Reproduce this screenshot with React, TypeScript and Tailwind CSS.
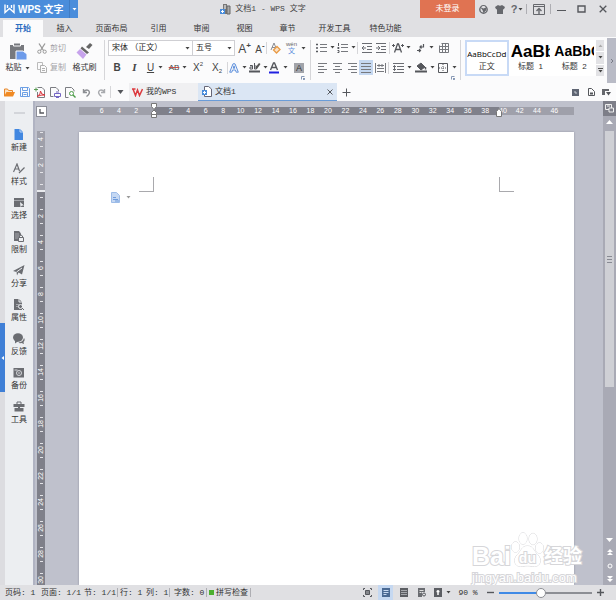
import React from "react";
import type { ReactNode } from "react";

const UI = "font-['Liberation_Sans','Noto_Sans_CJK_SC',sans-serif]";
const MONO = "font-['Liberation_Mono','Noto_Sans_CJK_SC',monospace]";

function Icon({ w = 12, h = 12, children }: { w?: number; h?: number; children: ReactNode }) {
  return (
    <svg width={w} height={h} viewBox={`0 0 ${w} ${h}`} fill="none" stroke="#55575c" strokeWidth="1" aria-hidden className="shrink-0">
      {children}
    </svg>
  );
}

function Caret() {
  return (
    <svg width="5" height="3" viewBox="0 0 5 3" className="shrink-0" aria-hidden>
      <path d="M0.5 0h4L2.5 2.6z" fill="#444" />
    </svg>
  );
}

function Btn({ className = "", title, children }: { className?: string; title: string; children: ReactNode }) {
  return (
    <button type="button" title={title} className={`flex h-[15px] shrink-0 items-center justify-center ${className}`}>
      {children}
    </button>
  );
}

function Sep({ className = "h-3", dark = false }: { className?: string; dark?: boolean }) {
  return <span className={`w-px shrink-0 ${dark ? "bg-[#aeaeb3]" : "bg-[#d6d6d9]"} ${className}`} />;
}

/* ---------- title bar ---------- */

function TitleBar() {
  return (
    <header className="flex h-[18px] items-center">
      <button type="button" className="flex h-full w-[69px] items-center gap-[3px] bg-[#4a8ddb] pl-1 text-[10px] text-white">
        <Icon w={11} h={10}>
          <path d="M1 0.500v8l4.500-4L10 8.500V.5M3.500 1v3M7.500 1v3" stroke="#fff" strokeWidth="1.400" />
        </Icon>
        <span className="whitespace-nowrap font-bold">WPS 文字</span>
      </button>
      <button type="button" title="菜单" className="flex h-full w-[9px] items-center justify-center border-l border-[#3f7cc4] bg-[#4a8ddb]">
        <svg width="5" height="3" viewBox="0 0 5 3" aria-hidden><path d="M0.500 0h4L2.500 2.600z" fill="#fff" /></svg>
      </button>
      <div className={`flex flex-1 items-center justify-center gap-1 pl-7 text-[8px] text-[#444] ${MONO}`}>
        <Icon w={11} h={12}>
          <path d="M3 1h4v10H3z" fill="#777" stroke="none" />
          <path d="M7 3h3v8H7z" fill="#aaa" stroke="#666" />
          <path d="M4 3h2M4 5h2" stroke="#fff" />
          <path d="M0 6h5v5H0z" fill="#4a8ddb" stroke="none" />
          <path d="M2.500 7v3M1 8.500h3" stroke="#fff" />
        </Icon>
        文档1 - WPS 文字
      </div>
      <button type="button" className="h-full w-[55px] bg-[#e07352] text-[8px] text-white">未登录</button>
      <Btn title="皮肤" className="w-4">
        <Icon w={9} h={9}>
          <circle cx="4.500" cy="4.500" r="3.700" stroke="#66686d" strokeWidth="1.400" />
          <path d="M1 2l3.500 1.500L8 2 7 5.500 4.500 8 3.500 5z" fill="#66686d" stroke="none" />
          <path d="M2.500 1h4l-2 1.500z" fill="#e0e0e3" stroke="none" />
        </Icon>
      </Btn>
      <Btn title="换肤" className="w-[17px]">
        <Icon w={10} h={9}>
          <path d="M0 2l3-2q2 1.500 4 0l3 2-1.200 2.500L8 4v5H2V4l-.8.5z" fill="#66686d" stroke="none" />
        </Icon>
      </Btn>
      <Btn title="帮助" className="w-[18px] gap-px text-[11px] font-bold text-[#66686d]">?<Caret /></Btn>
      <Sep dark className="h-[10px]" />
      <Btn title="功能区" className="w-[23px]">
        <Icon w={12} h={11}>
          <path d="M.5 .5h11v10H.5zM.5 2.500h11" stroke="#66686d" />
          <path d="M6 10V5M3.500 7L6 4.500 8.500 7" stroke="#66686d" strokeWidth="1.400" />
        </Icon>
      </Btn>
      <Sep dark className="h-[10px]" />
      <Btn title="最小化" className="w-[21px]"><Icon w={9} h={8}><path d="M0 5.500h9" /></Icon></Btn>
      <Btn title="最大化" className="w-[18px]"><Icon w={9} h={8}><path d="M1 1h7v6H1z" strokeWidth="1.400" /></Icon></Btn>
      <Btn title="关闭" className="w-[26px]"><Icon w={8} h={8}><path d="M.7 .7l6.600 6.600M7.300 .7L.7 7.300" strokeWidth="1.300" /></Icon></Btn>
    </header>
  );
}

const MENU = ["插入", "页面布局", "引用", "审阅", "视图", "章节", "开发工具", "特色功能"];

function MenuTabs() {
  return (
    <nav className="flex h-[19px] items-end pl-[3px] text-[8px] text-[#333]">
      <button type="button" className="h-[17px] w-10 bg-[#fbfbfc] font-bold text-[#2b6cc0]">开始</button>
      {MENU.map((m) => (
        <button key={m} type="button" className={`h-[17px] ${m.length === 4 ? "w-[51px]" : "w-[43px]"}`}>{m}</button>
      ))}
    </nav>
  );
}

/* ---------- ribbon ---------- */

function ClipboardGroup() {
  return (
    <div className="flex w-[104px] shrink-0 pt-1 text-[8px] text-[#333]">
      <button type="button" className="flex w-[35px] flex-col items-center gap-[2px] pt-px">
        <Icon w={18} h={18}>
          <path d="M1 3h14v14H1z" fill="#77797e" stroke="none" />
          <path d="M4.500 1h7v3h-7z" fill="#77797e" stroke="#fbfbfc" />
          <path d="M7 9h7l4 3v6H7z" fill="#6d9bea" stroke="#fbfbfc" />
        </Icon>
        <span className="flex items-center gap-[3px] leading-[12px]">粘贴<Caret /></span>
      </button>
      <div className="flex w-[33px] flex-col gap-1 text-[#a4a4a8]">
        <Btn title="剪切" className="gap-[3px]">
          <Icon w={10} h={11}>
            <path d="M2 .5l4.500 7M8 .5l-4.500 7" stroke="#999" strokeWidth="1.300" />
            <circle cx="2.300" cy="8.700" r="1.600" stroke="#999" /><circle cx="7.700" cy="8.700" r="1.600" stroke="#999" />
          </Icon>
          剪切
        </Btn>
        <Btn title="复制" className="gap-[3px]">
          <Icon w={10} h={11}>
            <path d="M.5 .5h5v7h-5z" stroke="#bbb" />
            <path d="M3.500 3.500h4l2 2v5h-6zM5 6.500h3M5 8.500h3" stroke="#b0b0b0" fill="#fbfbfc" />
          </Icon>
          复制
        </Btn>
      </div>
      <button type="button" className="flex w-[33px] flex-col items-center gap-[2px] pt-px">
        <Icon w={17} h={18}>
          <path d="M10 5l4-4 2.500 2-3.500 4z" fill="#666" stroke="none" />
          <path d="M6 4.500l7 6-2 1.500-6.500-5.500z" fill="#666" stroke="none" />
          <path d="M4 7l6.500 5.500L7 17 0.500 10.500z" fill="#c7a3ec" stroke="none" />
        </Icon>
        <span className="whitespace-nowrap leading-[12px]">格式刷</span>
      </button>
    </div>
  );
}

function Combo({ label, value, className }: { label: string; value: string; className: string }) {
  return (
    <label className={`grid h-4 shrink-0 grid-cols-1 items-center border border-[#cfcfd3] bg-white ${className}`}>
      <select aria-label={label} defaultValue={value} className="col-start-1 row-start-1 h-[14px] w-full appearance-none bg-transparent pl-[3px] text-[8px] text-[#222] outline-none">
        <option>{value}</option>
      </select>
      <span className="pointer-events-none col-start-1 row-start-1 mr-[2px] justify-self-end"><Caret /></span>
    </label>
  );
}

function FontGroup() {
  return (
    <div className="flex w-[205px] shrink-0 flex-col pt-[3px] text-[#444]">
      <div className="flex items-center pl-[3px]">
        <Combo label="字体" value="宋体 （正文）" className="w-[85px]" />
        <Combo label="字号" value="五号" className="-ml-px w-[43px]" />
        <Btn title="增大字号" className="w-[19px] items-start text-[12px] font-medium leading-[17px]">A<span className="text-[8px] font-bold leading-[9px]">+</span></Btn>
        <Btn title="减小字号" className="w-[12px] items-start text-[10px] font-medium leading-[17px]">A<span className="text-[8px] font-bold leading-[9px]">-</span></Btn>
        <Sep />
        <Btn title="清除格式" className="w-[17px]">
          <Icon w={11} h={12}>
            <path d="M1 8L4 1l2 5M2 5.500h3" stroke="#8a8c92" />
            <path d="M7 4.500l3 3-3.500 3.500-3-3z" stroke="#e89a45" strokeWidth="1.300" fill="#fbe3c8" />
          </Icon>
        </Btn>
        <Btn title="拼音指南" className="w-[24px] gap-[4px]">
          <span className="flex flex-col items-center text-[6px] leading-[5px] text-[#666]">wén<span className="text-[7px] leading-[7px] text-[#5c8fdc]">文</span></span>
          <Caret />
        </Btn>
      </div>
      <div className="flex items-center pl-[3px] pt-[4px]">
        <Btn title="加粗" className="w-[18px] text-[10px] font-bold">B</Btn>
        <Btn title="倾斜" className="w-[17px] font-['Liberation_Serif',serif] text-[11px] font-bold italic">I</Btn>
        <Btn title="下划线" className="w-[24px] gap-[4px] text-[10px] font-medium"><span className="underline">U</span><Caret /></Btn>
        <Btn title="删除线" className="w-[22px] gap-[3px] text-[8px]"><span className="line-through decoration-[#c0504d]">AB</span><Caret /></Btn>
        <Btn title="上标" className="w-[18px] items-start text-[10px] font-medium leading-[15px]">X<span className="text-[6px] leading-[8px]">2</span></Btn>
        <Btn title="下标" className="w-[20px] text-[10px] font-medium leading-[15px]">X<span className="pt-[6px] text-[6px] leading-[8px]">2</span></Btn>
        <Sep />
        <Btn title="文字效果" className="w-[20px] gap-[3px]">
          <Icon w={10} h={10}>
            <path d="M.7 9.200L4 .8h2l3.300 8.400H7.200L6.500 7h-3l-.7 2.200zM4.200 5.200h1.600L5 2.800z" stroke="#5c8fdc" />
          </Icon>
          <Caret />
        </Btn>
        <Btn title="突出显示" className="w-[20px] gap-[2px]">
          <Icon w={12} h={11}>
            <path d="M1 3.500h2.500v3.500H1V5h2.500M5.500 1v6M5.500 4h2v3h-2" />
            <path d="M6 6l4-5 1.500 1L8 7z" fill="#555" stroke="none" />
            <path d="M0 9.500h11" strokeWidth="2" />
          </Icon>
          <Caret />
        </Btn>
        <Btn title="字体颜色" className="w-[21px] gap-[4px]">
          <Icon w={10} h={12}>
            <path d="M1.500 8L4.500 1h1l3 7M3 5.500h4" strokeWidth="1.400" />
            <path d="M0 10.500h10" stroke="#2020e0" strokeWidth="2" />
          </Icon>
          <Caret />
        </Btn>
        <Btn title="字符底纹" className="w-[20px]"><span className="flex size-[10px] items-center justify-center bg-[#a2a4aa] text-[9px] leading-[10px] text-[#333]">A</span></Btn>
      </div>
      <Launcher />
    </div>
  );
}

function Launcher() {
  return (
    <div className="flex justify-end pr-[5px] pt-px">
      <Icon w={4} h={4}><path d="M.5 3.500v-3h3M2 2l1.500 1.500M3.500 2v1.500H2" stroke="#8798b5" /></Icon>
    </div>
  );
}

function Lines({ d }: { d: string }) {
  return <Icon w={10} h={10}><path d={d} stroke="#77797e" /></Icon>;
}

function ParagraphGroup() {
  return (
    <div className="flex w-[149px] shrink-0 flex-col pt-[3px]">
      <div className="flex items-center pl-[4px]">
        <Btn title="项目符号" className="w-[21px] gap-[3px]">
          <Icon w={11} h={10}><path d="M0 1.500h2M0 5h2M0 8.500h2" strokeWidth="1.500" /><path d="M4 1.500h7M4 4.500h7M4 8.500h7" stroke="#77797e" /></Icon><Caret />
        </Btn>
        <Btn title="编号" className="w-[20px] gap-[3px]">
          <Icon w={11} h={10}><path d="M1.500 0v3M.5 4.500h1.500v1H.5M.5 7.500h1.500v2H.5" /><path d="M4 1.500h7M4 4.500h7M4 8.500h7" stroke="#77797e" /></Icon><Caret />
        </Btn>
        <Sep className="mx-px h-3" />
        <Btn title="减少缩进" className="w-[15px]"><Icon w={10} h={10}><path d="M0 .5h10M5 3.500h5M5 6.500h5M0 9.500h10M4 5H0M2 3L0 5l2 2" stroke="#6a6c72" /></Icon></Btn>
        <Btn title="增加缩进" className="w-[14px]"><Icon w={10} h={10}><path d="M0 .5h10M5 3.500h5M5 6.500h5M0 9.500h10M0 5h4M2 3l2 2-2 2" stroke="#6a6c72" /></Icon></Btn>
        <Sep className="mx-px h-3" />
        <Btn title="中文版式" className="w-[21px] gap-[2px]">
          <Icon w={12} h={10}><path d="M2.500 9.500L5.500 1h1l3 8.500M4 6.500h4" strokeWidth="1.300" /><path d="M0 2.500h3M9 2.500h3M1.500 1v3M10.500 1v3" /></Icon><Caret />
        </Btn>
        <Btn title="显示标记" className="w-[25px] gap-[4px]">
          <Icon w={9} h={10}><path d="M7.500 1v3H4M5.500 2.500L4 4l1.500 1.500M1 7.500h3M3 6l1.500 1.500L3 9" strokeWidth="1.200" /></Icon><Caret />
        </Btn>
        <Btn title="插入表格" className="w-[13px]"><Icon w={10} h={10}><path d="M2.500 .5h7v9h-9v-7M0 3.500h10M0 6.500h10M3.500 0v10M6.500 0v10" stroke="#77797e" /></Icon></Btn>
      </div>
      <div className="flex items-center pl-[4px] pt-[5px]">
        <Btn title="左对齐" className="w-[15px]"><Lines d="M0 .5h9M0 3.500h6M0 6.500h9M0 9.500h6" /></Btn>
        <Btn title="居中" className="w-[15px]"><Lines d="M0 .5h9M2 3.500h5M0 6.500h9M2 9.500h5" /></Btn>
        <Btn title="右对齐" className="w-[14px]"><Lines d="M1 .5h9M4 3.500h6M1 6.500h9M4 9.500h6" /></Btn>
        <Btn title="两端对齐" className="w-[14px] bg-[#c5d8f1]"><Lines d="M0 .5h10M0 3.500h10M0 6.500h10M0 9.500h10" /></Btn>
        <Btn title="分散对齐" className="w-[14px]"><Icon w={11} h={10}><path d="M.5 0v10M10.500 0v10M2 2.500h7M2 5.500h7M4 1v3M7 1v3M2 8.500h7" stroke="#77797e" /></Icon></Btn>
        <Sep className="ml-px mr-[2px] h-3" />
        <Btn title="行距" className="w-[22px] gap-[3px]">
          <Icon w={11} h={10}><path d="M0 .5h11M4 3.500h7M4 6.500h7M0 9.500h11M1.500 2.500v5M0 4L1.500 2.500 3 4M0 6L1.500 7.500 3 6" stroke="#6a6c72" /></Icon><Caret />
        </Btn>
        <Btn title="底纹颜色" className="w-[24px] gap-[3px]">
          <Icon w={12} h={11}><path d="M2 4l4-3 4 4-4 3z" fill="#55575c" /><path d="M10.500 5v2.500" strokeWidth="1.500" /><path d="M0 9.500h12" strokeWidth="2" /></Icon><Caret />
        </Btn>
        <Btn title="边框" className="w-[20px] gap-[4px]">
          <Icon w={10} h={10}><path d="M.5 .5h9v9h-9z" /><path d="M5 1v8M1 5h8" strokeDasharray="1 1" /></Icon><Caret />
        </Btn>
      </div>
      <Launcher />
    </div>
  );
}

function StyleGallery() {
  return (
    <div className="ml-1 mt-[3px] flex h-[36px] min-w-0 flex-1 bg-white text-black">
      <button type="button" className="flex min-w-0 flex-1 flex-col items-center justify-end border-2 border-[#c8daf6] pb-px">
        <span className="whitespace-nowrap font-['Open_Sans',sans-serif] text-[8px] leading-[14px]">AaBbCcDd</span>
        <span className="text-[8px] leading-[12px] text-[#333]">正文</span>
      </button>
      <button type="button" className="flex min-w-0 flex-1 flex-col items-center justify-end overflow-hidden px-[2px] pb-[3px]">
        <span className="w-full overflow-hidden whitespace-nowrap text-left text-[17px] font-bold leading-[19px]">AaBb</span>
        <span className="text-[8px] leading-[12px] text-[#333]">标题&nbsp; 1</span>
      </button>
      <button type="button" className="flex min-w-0 flex-1 flex-col items-center justify-end overflow-hidden px-[2px] pb-[3px]">
        <span className="w-full overflow-hidden whitespace-nowrap text-left text-[14px] font-bold leading-[19px]">AaBbC</span>
        <span className="text-[8px] leading-[12px] text-[#333]">标题&nbsp; 2</span>
      </button>
      <div className="flex w-2 flex-col gap-px bg-white">
        <button type="button" title="上一行" className="flex flex-1 items-center justify-center bg-[#e2e2e5]"><Icon w={5} h={3}><path d="M.5 3h4L2.500 .5z" fill="#aaa" stroke="none" /></Icon></button>
        <button type="button" title="下一行" className="flex flex-1 items-center justify-center bg-[#e2e2e5]"><Caret /></button>
        <button type="button" title="更多样式" className="flex flex-1 flex-col items-center justify-center gap-px bg-[#e2e2e5]"><span className="h-px w-[5px] bg-[#555]" /><Caret /></button>
      </div>
    </div>
  );
}

function Ribbon() {
  return (
    <section className="flex h-[46px] bg-[#fbfbfc]">
      <ClipboardGroup />
      <Sep className="mt-[3px] h-10" />
      <FontGroup />
      <Sep className="mt-[3px] h-10" />
      <ParagraphGroup />
      <Sep className="mt-[3px] h-10" />
      <StyleGallery />
      <button type="button" title="展开" className="ml-[3px] mt-px flex w-[9px] items-center justify-center bg-[#b9bbc6]">
        <Icon w={4} h={6}><path d="M1 1l2 2-2 2" stroke="#777a85" /></Icon>
      </button>
    </section>
  );
}

/* ---------- quick access and document tabs ---------- */

function DocumentTabs() {
  return (
    <section className="flex h-[18px] items-center bg-[#fbfbfc] text-[8px] text-[#333]">
      <div className="flex items-center pl-px">
        <Btn title="打开" className="w-4"><Icon w={11} h={9}><path d="M.5 8V1h3l1 1.500h4V4" stroke="#e8872b" fill="#fbe0c0" /><path d="M0 8.500L2.500 4H11L9 8.500z" fill="#f08a24" stroke="none" /></Icon></Btn>
        <Btn title="保存" className="w-[15px]"><Icon w={10} h={10}><path d="M.5 .5h8l1 1v8h-9zM2.500 .5v3h5v-3M2.500 9.500v-4h5v4M3.500 7.500h3" stroke="#6c9fe4" /></Icon></Btn>
        <Btn title="输出为PDF" className="w-4"><Icon w={12} h={11}><path d="M3.500 .5h4.500l2.500 2.500v7.500h-7V5" stroke="#7b7d82" /><path d="M3 9.500q4-2 3.500-5.500 .5 4 4.500 4-4-.5-8 1.500z" stroke="#d8343c" /><path d="M0 2.500h4M2 .5v4" stroke="#5a9c54" /></Icon></Btn>
        <Btn title="打印" className="w-[15px]"><Icon w={11} h={11}><path d="M8.500 4V3L6 .5H.5v9h3" stroke="#7b7d82" /><path d="M4.500 6.500h6v3h-6zM6 5h3M6 10.500h3" stroke="#7466c4" /></Icon></Btn>
        <Btn title="打印预览" className="w-[15px]"><Icon w={11} h={11}><path d="M3.500 10.500h-3V.5h6l2.500 2.500v1.500" stroke="#7b7d82" /><circle cx="6.500" cy="6.500" r="2" stroke="#4c9c48" /><path d="M8 8l2.500 2.500" stroke="#4c9c48" strokeWidth="1.400" /></Icon></Btn>
        <Btn title="撤销" className="w-4"><Icon w={9} h={9}><path d="M1.500 1v3.500H5M1.500 4Q4 1 6.500 2.500 9 5 4.500 8.500" stroke="#8d8f94" strokeWidth="1.400" /></Icon></Btn>
        <Btn title="恢复" className="w-[14px]"><Icon w={9} h={9}><path d="M7.500 1v3.500H4M7.500 4Q5 1 2.500 2.500 0 5 4.500 8.500" stroke="#a8aaae" strokeWidth="1.400" /></Icon></Btn>
        <Sep className="ml-[2px] h-3" />
        <Btn title="自定义" className="w-[18px]"><Icon w={7} h={4}><path d="M.5 0h6L3.500 4z" fill="#55575c" stroke="none" /></Icon></Btn>
      </div>
      <button type="button" className={`flex h-full w-[69px] items-center gap-[3px] bg-[#f0f0f2] pl-[3px] ${MONO}`}>
        <Icon w={11} h={9}><path d="M0 1h3.500M1 1l2.500 6.500L5.500 2 7.500 7.500 10.500 1" stroke="#dc3a3f" strokeWidth="1.500" /></Icon>
        我的WPS
      </button>
      <div className="flex h-full w-[139px] items-center border-b border-[#6a9cd8] bg-[#dbe6f4] pl-1">
        <button type="button" className={`flex h-full flex-1 items-center gap-[3px] ${MONO}`}>
          <Icon w={10} h={11}><path d="M2.500 .5h4l3 2.500v7.500h-7z" stroke="#667" fill="#fff" /><path d="M0 4h5v5H0z" fill="#4a8ddb" stroke="none" /><path d="M2.500 5v3M1 6.500h3" stroke="#fff" /></Icon>
          文档1
        </button>
        <Btn title="关闭标签" className="w-[15px]"><Icon w={6} h={6}><path d="M.5 .5l5 5M5.500 .5l-5 5" /></Icon></Btn>
      </div>
      <Btn title="新建标签" className="w-[18px]"><Icon w={9} h={9}><path d="M4.500 .5v8M.5 4.500h8" /></Icon></Btn>
      <div className="ml-auto flex items-center pr-[2px]">
        <Btn title="阅读" className="w-[15px]"><Icon w={7} h={7}><path d="M0 0h7v7H0z" fill="#5f6573" stroke="none" /><path d="M3 2v2h2" stroke="#c8ccd4" /></Icon></Btn>
        <Btn title="文档" className="w-[16px]"><Icon w={7} h={8}><path d="M.5 .5h3l3 3v4h-6z" /><path d="M2 4.500h3v2H2z" fill="#55575c" stroke="none" /></Icon></Btn>
        <Btn title="窗口列表" className="w-[15px]"><Icon w={9} h={8}><path d="M0 1h7v2H3v4H0z" fill="#66686d" stroke="none" /><path d="M4 4h5L6.500 7.500z" fill="#55575c" stroke="none" /></Icon></Btn>
      </div>
    </section>
  );
}

/* ---------- side panel ---------- */

const G = "#6b6d72";
const SIDE: { label: string; icon: ReactNode }[] = [
  { label: "新建", icon: <><path d="M1.500 0H7l3 3v8H1.500z" fill="#4287e0" stroke="none" /><path d="M7 0v3h3" stroke="#b9d3f5" /></> },
  { label: "样式", icon: <path d="M.5 9L4 1l2.500 7M2 6h4M6 10l5.500-5.500" stroke={G} strokeWidth="1.200" /> },
  { label: "选择", icon: <><path d="M1 1h10v9H1z" fill={G} stroke="none" /><path d="M1 3.500h10" stroke="#a5a7ac" /><path d="M7 5l4 3.500H9L7.500 10z" fill="#eceef1" stroke="none" /></> },
  { label: "限制", icon: <><path d="M1 0h5l2 2.500V10H1z" fill={G} stroke="none" /><path d="M3 2v6M5 2v6" stroke="#a5a7ac" /><path d="M5.500 6.500h5v4h-5zM6.500 6.500V5q1.500-2 3 0v1.500" fill="#eceef1" stroke={G} /></> },
  { label: "分享", icon: <><path d="M0 6L11.500 0 9 9.500 5.500 7.500 4 10.500 3.500 7z" fill={G} stroke="none" /><path d="M3.500 7L9 3" stroke="#eceef1" /></> },
  { label: "属性", icon: <><path d="M1 0h5l3 3v8H1z" fill={G} stroke="none" /><path d="M6 0v3h3" stroke="#eceef1" /><path d="M3 5.500h3M3 7.500h2" stroke="#a5a7ac" /><circle cx="7.500" cy="7.500" r="2" stroke="#eceef1" /><path d="M9 9l2 2" stroke={G} /></> },
  { label: "反馈", icon: <><ellipse cx="5" cy="4.500" rx="5" ry="4.200" fill={G} stroke="none" /><path d="M2 7v3.500L5.500 8z" fill={G} stroke="none" /><path d="M11 5q1.500 2-.5 4l.5 2-2.500-1Q6 10.500 5.500 9.500 10 9 11 5z" fill={G} stroke="none" /></> },
  { label: "备份", icon: <><path d="M.5 1h10.500v9.500H.5z" fill={G} stroke="none" /><circle cx="6" cy="6" r="2.500" stroke="#d5d7db" /><path d="M1.500 3h3" stroke="#d5d7db" /><circle cx="6" cy="6" r=".8" fill="#d5d7db" stroke="none" /></> },
  { label: "工具", icon: <><path d="M.5 3h11v3H.5zM1.500 7h9v3.500h-9z" fill={G} stroke="none" /><path d="M4 3V1h4v2" stroke={G} /><path d="M5 6.500h2" stroke={G} strokeWidth="2" /></> },
];

function SidePanel() {
  return (
    <aside className="flex shrink-0">
      <div className="flex w-[5px] flex-col bg-[#dcdce0] pt-[222px]">
        <button type="button" title="折叠面板" className="flex h-[69px] items-center justify-center bg-[#3f7fd6]">
          <Icon w={3} h={4}><path d="M3 0v4L.5 2z" fill="#fff" stroke="none" /></Icon>
        </button>
      </div>
      <div className="flex w-7 flex-col items-center bg-[#eceef1] pt-[11px]">
        <span className="mb-[15px] h-[2px] w-[11px] bg-[#d3d5da]" />
        {SIDE.map((s) => (
          <button key={s.label} type="button" className="flex h-[34px] w-full flex-col items-center gap-px text-[8px] leading-[11px] text-[#333]">
            <Icon w={12} h={12}>{s.icon}</Icon>
            {s.label}
          </button>
        ))}
      </div>
    </aside>
  );
}

/* ---------- rulers ---------- */

function HNum({ n }: { n: number }) {
  return <span className="flex-1 text-center">{n}</span>;
}

function Stop({ className }: { className: string }) {
  return (
    <span className={`absolute top-[-4px] ${className}`}>
      <Icon w={6} h={15}>
        <path d="M.5 .5h5v3L3 6.500.5 3.500zM.5 9.500L3 7l2.500 2.500v2h-5zM.5 11.500h5v3h-5z" fill="#fff" stroke="#777" />
      </Icon>
    </span>
  );
}

function HRuler() {
  const body = Array.from({ length: 19 }, (_, i) => (i + 1) * 2);
  return (
    <div className="relative flex h-2 bg-[#9fa0aa] text-[7px] font-medium leading-[8px] text-white">
      <div className="flex w-[75px] pl-[14px] pr-[9px]">{[6, 4, 2].map((n) => <HNum key={n} n={n} />)}</div>
      <div className="relative flex flex-1 bg-[#7f808a] pl-2 pr-[5px]">
        <Stop className="left-[-3px]" />
        {body.map((n) => <HNum key={n} n={n} />)}
        <span className="absolute right-[-3px] top-0">
          <Icon w={6} h={10}><path d="M.5 4.500L3 1.500l2.500 3v5h-5z" fill="#fff" stroke="#777" /></Icon>
        </span>
      </div>
      <div className="flex w-[75px] pr-[11px]">
        <span className="w-3">40</span>
        {[42, 44, 46].map((n) => <HNum key={n} n={n} />)}
      </div>
    </div>
  );
}

function VCell({ n }: { n: number }) {
  return (
    <div className="flex h-[26px] shrink-0 flex-col items-center justify-center gap-px">
      <span className="h-px w-[3px] bg-[#e4e4e8]" />
      <span className="flex h-[11px] items-center justify-center text-[7px] font-medium leading-[8px] [writing-mode:sideways-lr]">{n}</span>
      <span className="h-px w-[3px] bg-[#e4e4e8]" />
    </div>
  );
}

function VRuler() {
  const body = Array.from({ length: 15 }, (_, i) => (i + 1) * 2);
  return (
    <div className="flex min-h-0 w-2 flex-1 flex-col overflow-hidden text-white">
      <div className="flex h-[59px] shrink-0 flex-col items-center justify-end overflow-hidden bg-[#9fa0aa] pb-[5px]">
        <VCell n={4} />
        <VCell n={2} />
        <span className="mt-[6px] h-px w-[3px] shrink-0 bg-[#e4e4e8]" />
      </div>
      <span className="h-[2px] shrink-0 bg-[#e9eaee]" />
      <div className="flex min-h-0 flex-1 flex-col items-center overflow-hidden bg-[#7f808a] pt-[5px]">
        <span className="mb-[5px] h-px w-[3px] shrink-0 bg-[#e4e4e8]" />
        {body.map((n) => <VCell key={n} n={n} />)}
      </div>
    </div>
  );
}

/* ---------- page ---------- */

function Watermark() {
  const outline = "text-white [-webkit-text-stroke:2px_#d6d6d9] [paint-order:stroke_fill]";
  return (
    <div className={`pointer-events-none absolute bottom-0 right-[21px] flex w-[110px] flex-col ${outline}`}>
      <div className="flex items-end">
        <span className="text-[25px] font-bold leading-[28px]">Bai</span>
        <span className="relative flex h-[38px] w-[33px] items-end justify-center pb-[5px]">
          <svg width="33" height="36" viewBox="0 0 33 36" fill="#fff" stroke="#d6d6d9" className="absolute inset-0" aria-hidden>
            <ellipse cx="4.500" cy="15" rx="4" ry="5.200" />
            <ellipse cx="12" cy="6.500" rx="4" ry="5.700" />
            <ellipse cx="22" cy="7" rx="4" ry="5.700" />
            <ellipse cx="28.500" cy="16" rx="4" ry="5.200" />
            <path d="M16.500 14c6 0 6 5 10 8.500 5 5 3 12-3 12-3 0-4-.7-7-.7s-4 .7-7 .7c-6 0-8-7-3-12 4-3.500 4-8.500 10-8.500z" />
          </svg>
          <span className="relative text-[14px] font-bold leading-[14px]">du</span>
        </span>
        <span className="text-[19px] font-bold leading-[26px]">经验</span>
      </div>
      <span className="text-[13px] leading-[15px]">jingyan.baidu.com</span>
    </div>
  );
}

function Workspace() {
  return (
    <div className="relative flex min-w-0 flex-1 bg-[#bfc1cc]">
      <div className="flex w-[46px] shrink-0 flex-col border-l-2 border-[#b0b3c2] pl-[2px]">
        <button type="button" title="制表符" className="-ml-px mt-[5px] flex size-[11px] items-center justify-center border border-[#8d8f99] bg-white">
          <Icon w={5} h={5}><path d="M1 0v4h4" strokeWidth="1.300" /></Icon>
        </button>
        <div className="flex min-h-0 flex-1 flex-col pt-[14px]"><VRuler /></div>
      </div>
      <div className="flex min-w-0 flex-1 flex-col pt-[6px]">
        <HRuler />
        <article className="mt-[17px] flex flex-1 flex-col bg-white pt-[45px] shadow-[0_0_2px_#8e90a0]">
          <div className="flex justify-between px-[60px]">
            <span className="size-[15px] border-b border-r border-[#a9a9ad]" />
            <span className="size-[15px] border-b border-l border-[#a9a9ad]" />
          </div>
          <Btn title="粘贴选项" className="ml-8 -mt-[2px] w-5 gap-[5px]">
            <Icon w={10} h={11}><path d="M.5 .5h5l3 3v7h-8z" stroke="#9dbce8" fill="#c5d8f3" /><path d="M2 5.500h3M2 7.500h5M4 9h4" stroke="#6f9bdb" /></Icon>
            <svg width="5" height="3" viewBox="0 0 5 3" className="shrink-0" aria-hidden><path d="M.5 0h4L2.500 2.600z" fill="#999" /></svg>
          </Btn>
        </article>
      </div>
      <div className="w-[29px] shrink-0" />
      <Watermark />
    </div>
  );
}

function ScrollBar() {
  return (
    <div className="flex w-[13px] shrink-0 flex-col bg-[#a9aab5]">
      <Btn title="标尺" className="w-full bg-[#7d7e88]">
        <Icon w={9} h={9}><path d="M.5 .5h6v5h-6z" stroke="#eee" /><path d="M4 4h4.500v4H4zM2 2h3" stroke="#eee" fill="#7d7e88" /></Icon>
      </Btn>
      <Btn title="向上滚动" className="w-full pb-[3px]"><Icon w={7} h={4}><path d="M0 4h7L3.500 0z" fill="#fff" stroke="none" /></Icon></Btn>
      <div className="mx-[2px] flex h-[256px] flex-col items-center justify-center gap-[2px] bg-[#cfd0d5]">
        <span className="h-px w-[5px] bg-[#888a93]" /><span className="h-px w-[5px] bg-[#888a93]" /><span className="h-px w-[5px] bg-[#888a93]" />
      </div>
      <div className="mt-auto flex flex-col">
        <button type="button" title="向下滚动" className="flex h-[13px] items-center justify-center"><Icon w={7} h={4}><path d="M0 0h7L3.500 4z" fill="#fff" stroke="none" /></Icon></button>
        <button type="button" title="上一页" className="flex h-[13px] items-center justify-center"><Icon w={6} h={7}><path d="M0 3h6L3 0zM0 6h6L3 3z" fill="#fff" stroke="none" /></Icon></button>
        <button type="button" title="选择浏览对象" className="flex h-[13px] items-center justify-center"><Icon w={6} h={6}><circle cx="3" cy="3" r="2" stroke="#fff" /></Icon></button>
        <button type="button" title="下一页" className="flex h-[13px] items-center justify-center"><Icon w={6} h={7}><path d="M0 1h6L3 4zM0 4h6L3 7z" fill="#fff" stroke="none" /></Icon></button>
      </div>
    </div>
  );
}

/* ---------- status bar ---------- */

function StatusBar() {
  const bar = <Sep dark className="h-[9px]" />;
  return (
    <footer className={`flex h-[15px] shrink-0 items-center bg-[#e0e0e3] text-[8px] text-[#333] ${MONO}`}>
      <div className="flex items-center whitespace-nowrap pl-[5px]">
        <span className="w-9">页码: 1</span>
        <span className="w-[43px]">页面: 1/1</span>
        <span className="w-[33px]">节: 1/1</span>
        {bar}
        <span className="w-[26px] pl-[2px]">行: 1</span>
        <span className="w-[25px] pl-[2px]">列: 1</span>
        {bar}
        <span className="w-9 pl-1">字数: 0</span>
        {bar}
        <span className="ml-[2px] mr-[2px] size-[5px] bg-[#4caf2f]" />
        <span className="mr-[2px]">拼写检查</span>
        {bar}
      </div>
      <div className="ml-auto flex items-center">
        <Btn title="全屏" className="w-[22px]"><Icon w={9} h={9}><path d="M2.500 2.500h4v4h-4z" fill="#85878c" /><path d="M.5 2V.5H2M7 .5h1.500V2M8.500 7v1.500H7M2 8.500H.5V7" /></Icon></Btn>
        <Btn title="页面视图" className="w-[15px] bg-[#c5d8f1]"><Icon w={8} h={9}><path d="M0 0h8v9H0z" fill="#4a6a94" stroke="none" /><path d="M1.500 2.500h5M1.500 4.500h5M1.500 6.500h3" stroke="#c5d8f1" /></Icon></Btn>
        <Btn title="大纲视图" className="w-[21px]"><Icon w={8} h={9}><path d="M0 0h8v9H0z" fill="#5c5e63" stroke="none" /><path d="M1 2.500h6M1 4.500h6M1 6.500h6" stroke="#a5a7ac" /></Icon></Btn>
        <Btn title="网页视图" className="w-4"><Icon w={8} h={9}><path d="M0 0h7v4H4v5H0z" fill="#6a6c71" stroke="none" /><path d="M1.500 2.500h4M1.500 4.500h2" stroke="#ddd" /><circle cx="6" cy="6.500" r="1.500" /></Icon></Btn>
        <Btn title="护眼模式" className="w-[24px] gap-1"><Icon w={8} h={9}><path d="M0 0h8v9H0z" fill="#5c5e63" stroke="none" /><path d="M4 2v5M2.500 3.500h3" stroke="#fff" strokeWidth="1.500" /></Icon><Caret /></Btn>
        <span className="w-[28px] text-center">90 %</span>
        <Btn title="缩小" className="w-[17px]"><Icon w={7} h={7}><path d="M0 3.500h7" strokeWidth="1.400" /></Icon></Btn>
        <input
          type="range"
          aria-label="显示比例"
          min={0}
          max={100}
          defaultValue={44}
          className="h-[11px] w-[93px] appearance-none bg-transparent [&::-webkit-slider-runnable-track]:h-[2px] [&::-webkit-slider-runnable-track]:bg-[linear-gradient(to_right,#3f8ae6_44%,#8c8e94_44%)] [&::-webkit-slider-thumb]:-mt-1 [&::-webkit-slider-thumb]:size-[10px] [&::-webkit-slider-thumb]:appearance-none [&::-webkit-slider-thumb]:rounded-full [&::-webkit-slider-thumb]:border [&::-webkit-slider-thumb]:border-[#8c8e94] [&::-webkit-slider-thumb]:bg-white"
        />
        <Btn title="放大" className="mr-[8px] w-[16px]"><Icon w={7} h={7}><path d="M0 3.500h7M3.500 0v7" strokeWidth="1.400" /></Icon></Btn>
      </div>
    </footer>
  );
}

export default function App() {
  return (
    <div className={`flex h-screen min-h-[400px] flex-col overflow-hidden bg-[#e0e0e3] ${UI}`}>
      <TitleBar />
      <MenuTabs />
      <Ribbon />
      <DocumentTabs />
      <main className="flex min-h-0 flex-1 overflow-hidden">
        <SidePanel />
        <Workspace />
        <ScrollBar />
      </main>
      <StatusBar />
    </div>
  );
}
